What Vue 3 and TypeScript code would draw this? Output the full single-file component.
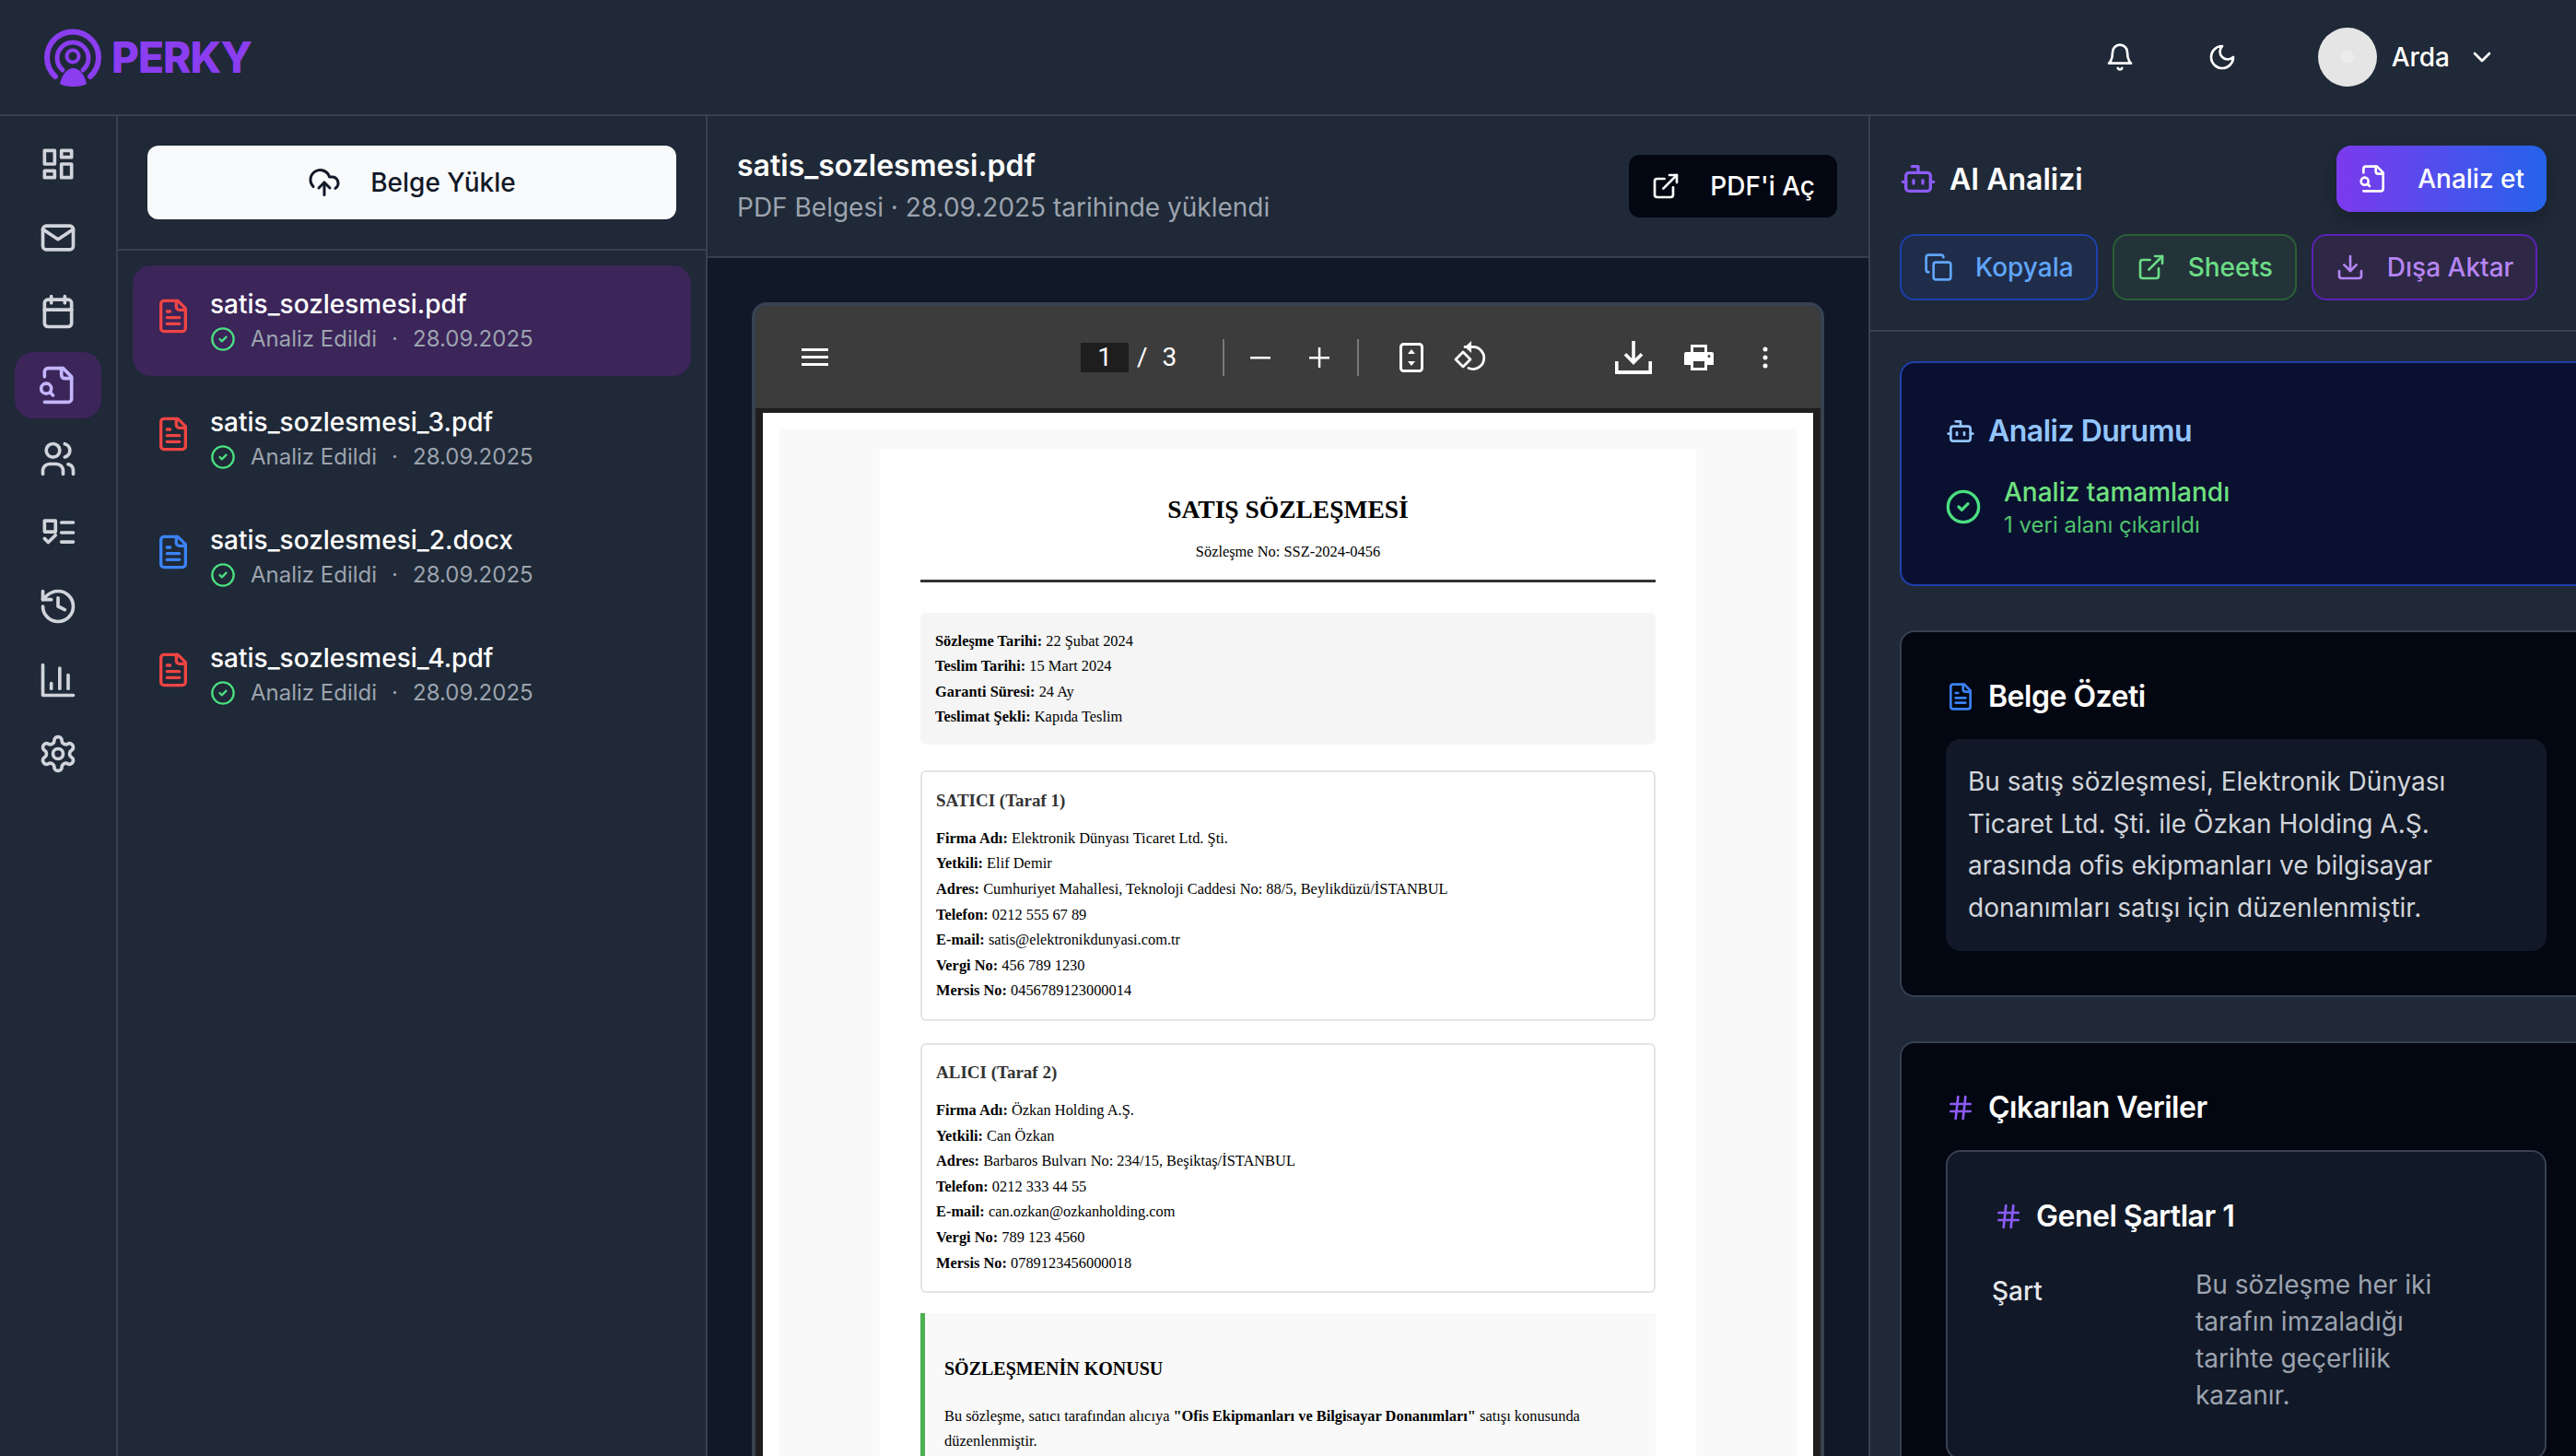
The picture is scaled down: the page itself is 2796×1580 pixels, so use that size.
<script setup lang="ts">
const icons: Record<string, string[]> = {
  dashboard: ['M4 4h6v8H4z', 'M4 16h6v4H4z', 'M14 12h6v8h-6z', 'M14 4h6v4h-6z'],
  mail: ['M3 7a2 2 0 0 1 2-2h14a2 2 0 0 1 2 2v10a2 2 0 0 1-2 2H5a2 2 0 0 1-2-2z', 'M3 7l9 6 9-6'],
  calendar: ['M4 7a2 2 0 0 1 2-2h12a2 2 0 0 1 2 2v12a2 2 0 0 1-2 2H6a2 2 0 0 1-2-2z', 'M16 3v4', 'M8 3v4', 'M4 11h16'],
  fileSearch: ['M4 22h14a2 2 0 0 0 2-2V7l-5-5H6a2 2 0 0 0-2 2v3', 'M14 2v4a2 2 0 0 0 2 2h4', 'M5 17a3 3 0 1 0 0-6 3 3 0 0 0 0 6z', 'M9 18l-1.5-1.5'],
  users: ['M5 7a4 4 0 1 0 8 0 4 4 0 1 0-8 0', 'M3 21v-2a4 4 0 0 1 4-4h4a4 4 0 0 1 4 4v2', 'M16 3.13a4 4 0 0 1 0 7.75', 'M21 21v-2a4 4 0 0 0-3-3.85'],
  tasks: ['M4 5h6.5v6.5H4z', 'M14 6h7', 'M14 12h7', 'M14 17.5h7', 'M4 15.5l2.2 2.2 4.3-4.2'],
  history: ['M3 12a9 9 0 1 0 9-9 9.75 9.75 0 0 0-6.74 2.74L3 8', 'M3 3v5h5', 'M12 7v5l4 2'],
  chart: ['M3 3v18h18', 'M18 17V9', 'M13 17V5', 'M8 17v-3'],
  settings: [
    'M12.22 2h-.44a2 2 0 0 0-2 2v.18a2 2 0 0 1-1 1.73l-.43.25a2 2 0 0 1-2 0l-.15-.08a2 2 0 0 0-2.73.73l-.22.38a2 2 0 0 0 .73 2.73l.15.1a2 2 0 0 1 1 1.72v.51a2 2 0 0 1-1 1.74l-.15.09a2 2 0 0 0-.73 2.73l.22.38a2 2 0 0 0 2.73.73l.15-.08a2 2 0 0 1 2 0l.43.25a2 2 0 0 1 1 1.73V20a2 2 0 0 0 2 2h.44a2 2 0 0 0 2-2v-.18a2 2 0 0 1 1-1.73l.43-.25a2 2 0 0 1 2 0l.15.08a2 2 0 0 0 2.73-.73l.22-.39a2 2 0 0 0-.73-2.73l-.15-.08a2 2 0 0 1-1-1.74v-.5a2 2 0 0 1 1-1.74l.15-.09a2 2 0 0 0 .73-2.73l-.22-.38a2 2 0 0 0-2.73-.73l-.15.08a2 2 0 0 1-2 0l-.43-.25a2 2 0 0 1-1-1.73V4a2 2 0 0 0-2-2z',
    'M9 12a3 3 0 1 0 6 0 3 3 0 1 0-6 0',
  ],
  upload: ['M4 14.9A7 7 0 1 1 15.71 8h1.79a4.5 4.5 0 0 1 2.5 8.24', 'M12 12v9', 'M16 16l-4-4-4 4'],
  check: ['M2 12a10 10 0 1 0 20 0 10 10 0 1 0-20 0', 'M9 12l2 2 4-4'],
  file: ['M15 2H6a2 2 0 0 0-2 2v16a2 2 0 0 0 2 2h12a2 2 0 0 0 2-2V7z', 'M14 2v4a2 2 0 0 0 2 2h4', 'M10 9H8', 'M16 13H8', 'M16 17H8'],
  external: ['M15 3h6v6', 'M10 14L21 3', 'M18 13v6a2 2 0 0 1-2 2H5a2 2 0 0 1-2-2V8a2 2 0 0 1 2-2h6'],
  copy: ['M10 8h10a2 2 0 0 1 2 2v10a2 2 0 0 1-2 2H10a2 2 0 0 1-2-2V10a2 2 0 0 1 2-2z', 'M4 16c-1.1 0-2-.9-2-2V4c0-1.1.9-2 2-2h10c1.1 0 2 .9 2 2'],
  download: ['M21 15v4a2 2 0 0 1-2 2H5a2 2 0 0 1-2-2v-4', 'M7 10l5 5 5-5', 'M12 15V3'],
  bot: ['M12 8V4H8', 'M6 8h12a2 2 0 0 1 2 2v8a2 2 0 0 1-2 2H6a2 2 0 0 1-2-2v-8a2 2 0 0 1 2-2z', 'M2 14h2', 'M20 14h2', 'M15 13v2', 'M9 13v2'],
  bell: ['M6 8a6 6 0 0 1 12 0c0 7 3 9 3 9H3s3-2 3-9', 'M10.3 21a1.94 1.94 0 0 0 3.4 0'],
  moon: ['M12 3a6 6 0 0 0 9 9 9 9 0 1 1-9-9z'],
  chevron: ['M6 9l6 6 6-6'],
  hash: ['M4 9h16', 'M4 15h16', 'M10 3L8 21', 'M16 3l-2 18'],
}

const navItems = ['dashboard', 'mail', 'calendar', 'fileSearch', 'users', 'tasks', 'history', 'chart', 'settings']

const documents = [
  { name: 'satis_sozlesmesi.pdf', kind: 'pdf', active: true },
  { name: 'satis_sozlesmesi_3.pdf', kind: 'pdf', active: false },
  { name: 'satis_sozlesmesi_2.docx', kind: 'doc', active: false },
  { name: 'satis_sozlesmesi_4.pdf', kind: 'pdf', active: false },
]

const infoRows = [
  ['Sözleşme Tarihi:', '22 Şubat 2024'],
  ['Teslim Tarihi:', '15 Mart 2024'],
  ['Garanti Süresi:', '24 Ay'],
  ['Teslimat Şekli:', 'Kapıda Teslim'],
]

const parties = [
  {
    title: 'SATICI (Taraf 1)',
    rows: [
      ['Firma Adı:', 'Elektronik Dünyası Ticaret Ltd. Şti.'],
      ['Yetkili:', 'Elif Demir'],
      ['Adres:', 'Cumhuriyet Mahallesi, Teknoloji Caddesi No: 88/5, Beylikdüzü/İSTANBUL'],
      ['Telefon:', '0212 555 67 89'],
      ['E-mail:', 'satis@elektronikdunyasi.com.tr'],
      ['Vergi No:', '456 789 1230'],
      ['Mersis No:', '0456789123000014'],
    ],
  },
  {
    title: 'ALICI (Taraf 2)',
    rows: [
      ['Firma Adı:', 'Özkan Holding A.Ş.'],
      ['Yetkili:', 'Can Özkan'],
      ['Adres:', 'Barbaros Bulvarı No: 234/15, Beşiktaş/İSTANBUL'],
      ['Telefon:', '0212 333 44 55'],
      ['E-mail:', 'can.ozkan@ozkanholding.com'],
      ['Vergi No:', '789 123 4560'],
      ['Mersis No:', '0789123456000018'],
    ],
  },
]
</script>

<template>
  <div class="app">
    <header class="topbar">
      <div class="brand">
        <svg class="logo" viewBox="0 0 62 63" fill="none">
          <path d="M12 52A28 28 0 1 1 50 52" stroke="#8b3df0" stroke-width="6" />
          <path d="M20 45A17 17 0 1 1 42 45" stroke="#8b3df0" stroke-width="5" />
          <circle cx="31" cy="30" r="6.5" stroke="#8b3df0" stroke-width="4" />
          <path d="M17 60C19 50 25 43 31.500 43C38 43 44 50 46 60C40 64 23 64 17 60Z" fill="#8b3df0" />
        </svg>
        <span class="brand-name">PERKY</span>
      </div>
      <div class="topbar-right">
        <svg class="ic32 bell" viewBox="0 0 24 24"><path v-for="d in icons.bell" :key="d" :d="d" /></svg>
        <svg class="ic32 moon" viewBox="0 0 24 24"><path v-for="d in icons.moon" :key="d" :d="d" /></svg>
        <div class="avatar"><span class="avatar-dot"></span></div>
        <span class="user-name">Arda</span>
        <svg class="ic32 chevron" viewBox="0 0 24 24"><path v-for="d in icons.chevron" :key="d" :d="d" /></svg>
      </div>
    </header>

    <div class="main">
      <nav class="sidebar">
        <div v-for="item in navItems" :key="item" class="nav-item" :class="{ active: item === 'fileSearch' }">
          <svg class="nav-icon" viewBox="0 0 24 24"><path v-for="d in icons[item]" :key="d" :d="d" /></svg>
        </div>
      </nav>

      <section class="doc-list">
        <div class="upload-wrap">
          <button class="upload-btn">
            <svg class="ic36" viewBox="0 0 24 24"><path v-for="d in icons.upload" :key="d" :d="d" /></svg>
            Belge Yükle
          </button>
        </div>
        <div class="doc-items">
          <div v-for="doc in documents" :key="doc.name" class="doc-item" :class="{ active: doc.active }">
            <svg class="doc-icon" :class="doc.kind" viewBox="0 0 24 24"><path v-for="d in icons.file" :key="d" :d="d" /></svg>
            <div>
              <div class="doc-name">{{ doc.name }}</div>
              <div class="doc-meta">
                <svg class="check-icon" viewBox="0 0 24 24"><path v-for="d in icons.check" :key="d" :d="d" /></svg>
                <span>Analiz Edildi</span>
                <span class="meta-dot">·</span>
                <span>28.09.2025</span>
              </div>
            </div>
          </div>
        </div>
      </section>

      <section class="viewer">
        <div class="viewer-head">
          <div>
            <div class="viewer-title">satis_sozlesmesi.pdf</div>
            <div class="viewer-sub">PDF Belgesi · 28.09.2025 tarihinde yüklendi</div>
          </div>
          <button class="open-btn">
            <svg class="ic32" viewBox="0 0 24 24"><path v-for="d in icons.external" :key="d" :d="d" /></svg>
            PDF'i Aç
          </button>
        </div>
        <div class="viewer-body">
          <div class="pdf-frame">
            <div class="pdf-toolbar">
              <svg class="pdf-menu" viewBox="0 0 29 19"><path d="M0 0h29v3H0zM0 8h29v3H0zM0 16h29v3H0z" /></svg>
              <span class="page-box">1</span>
              <span class="page-sep">/</span>
              <span class="page-total">3</span>
              <span class="pdf-divider first"></span>
              <svg class="pdf-zoom minus" viewBox="0 0 22 22"><path d="M0 10h22v2.500H0z" /></svg>
              <svg class="pdf-zoom plus" viewBox="0 0 22 22"><path d="M0 10h22v2.500H0zM9.800 0h2.500v22H9.800z" /></svg>
              <span class="pdf-divider"></span>
              <svg class="pdf-fit" viewBox="0 0 26 32">
                <rect x="1.500" y="1.500" width="23" height="29" rx="3" fill="none" stroke="#fff" stroke-width="3" />
                <path d="M13 7l4 5H9zM13 25l-4-5h8z" />
              </svg>
              <svg class="pdf-rotate" viewBox="0 0 36 36">
                <path d="M12 6.500h8a12 12 0 1 1-4 23" fill="none" stroke="#fff" stroke-width="2.800" />
                <path d="M19 0v13l-7-6.500z" />
                <path d="M10 12l8 8-8 8-8-8z" fill="none" stroke="#fff" stroke-width="2.800" />
              </svg>
              <svg class="pdf-download" viewBox="0 0 40 36">
                <path d="M18.200 0h3.600v19l6-6 2.500 2.500L20 26 9.700 15.500 12.200 13l6 6z" />
                <path d="M0 22h3.600v10h32.800V22H40v14H0z" />
              </svg>
              <svg class="pdf-print" viewBox="0 0 32 28">
                <path d="M7 8V0h18v8h5a2 2 0 0 1 2 2v12h-7v6H7v-6H0V10a2 2 0 0 1 2-2zm3-5v5h12V3zm0 15v7h12v-7zM27 11a1.500 1.500 0 1 0 0 3 1.500 1.500 0 0 0 0-3z" fill-rule="evenodd" />
              </svg>
              <svg class="pdf-more" viewBox="0 0 6 24">
                <circle cx="3" cy="3" r="2.500" /><circle cx="3" cy="12" r="2.500" /><circle cx="3" cy="21" r="2.500" />
              </svg>
            </div>
            <div class="pdf-stage">
              <div class="pdf-page">
                <div class="contract-bg">
                  <article class="contract">
                    <h1 class="contract-title">SATIŞ SÖZLEŞMESİ</h1>
                    <div class="contract-no">Sözleşme No: SSZ-2024-0456</div>
                    <div class="contract-rule"></div>
                    <div class="info-box">
                      <p v-for="row in infoRows" :key="row[0]"><b>{{ row[0] }}</b> {{ row[1] }}</p>
                    </div>
                    <div v-for="party in parties" :key="party.title" class="party">
                      <h3>{{ party.title }}</h3>
                      <p v-for="row in party.rows" :key="row[0]"><b>{{ row[0] }}</b> {{ row[1] }}</p>
                    </div>
                    <div class="clause">
                      <h2>SÖZLEŞMENİN KONUSU</h2>
                      <p>Bu sözleşme, satıcı tarafından alıcıya <b>"Ofis Ekipmanları ve Bilgisayar Donanımları"</b> satışı konusunda düzenlenmiştir.</p>
                    </div>
                  </article>
                </div>
              </div>
            </div>
          </div>
        </div>
      </section>

      <aside class="analysis">
        <div class="analysis-head">
          <div class="analysis-top">
            <div class="analysis-title">
              <svg class="ic40 purple" viewBox="0 0 24 24"><path v-for="d in icons.bot" :key="d" :d="d" /></svg>
              AI Analizi
            </div>
            <button class="analyze-btn">
              <svg class="ic32" viewBox="0 0 24 24"><path v-for="d in icons.fileSearch" :key="d" :d="d" /></svg>
              Analiz et
            </button>
          </div>
          <div class="action-row">
            <button class="action blue">
              <svg class="ic32" viewBox="0 0 24 24"><path v-for="d in icons.copy" :key="d" :d="d" /></svg>
              Kopyala
            </button>
            <button class="action green">
              <svg class="ic32" viewBox="0 0 24 24"><path v-for="d in icons.external" :key="d" :d="d" /></svg>
              Sheets
            </button>
            <button class="action violet">
              <svg class="ic32" viewBox="0 0 24 24"><path v-for="d in icons.download" :key="d" :d="d" /></svg>
              Dışa Aktar
            </button>
          </div>
        </div>

        <div class="analysis-body">
          <div class="card status-card">
            <div class="card-title status-title">
              <svg class="ic32" viewBox="0 0 24 24"><path v-for="d in icons.bot" :key="d" :d="d" /></svg>
              Analiz Durumu
            </div>
            <div class="status-row">
              <svg class="status-check" viewBox="0 0 24 24"><path v-for="d in icons.check" :key="d" :d="d" /></svg>
              <div>
                <div class="status-main">Analiz tamamlandı</div>
                <div class="status-sub">1 veri alanı çıkarıldı</div>
              </div>
            </div>
          </div>

          <div class="card summary-card">
            <div class="card-title">
              <svg class="ic32 blue-ic" viewBox="0 0 24 24"><path v-for="d in icons.file" :key="d" :d="d" /></svg>
              Belge Özeti
            </div>
            <div class="summary-box">
              Bu satış sözleşmesi, Elektronik Dünyası Ticaret Ltd. Şti. ile Özkan Holding A.Ş. arasında ofis ekipmanları ve bilgisayar donanımları satışı için düzenlenmiştir.
            </div>
          </div>

          <div class="card data-card">
            <div class="card-title">
              <svg class="ic32 hash" viewBox="0 0 24 24"><path v-for="d in icons.hash" :key="d" :d="d" /></svg>
              Çıkarılan Veriler
            </div>
            <div class="data-box">
              <div class="card-title data-title">
                <svg class="ic32 hash" viewBox="0 0 24 24"><path v-for="d in icons.hash" :key="d" :d="d" /></svg>
                Genel Şartlar 1
              </div>
              <div class="data-row">
                <div class="data-label">Şart</div>
                <div class="data-value">Bu sözleşme her iki tarafın imzaladığı tarihte geçerlilik kazanır.</div>
              </div>
            </div>
          </div>
        </div>
      </aside>
    </div>
  </div>
</template>

<style>
html, body { margin: 0; background: #1f2937; }
</style>

<style scoped>
* { box-sizing: border-box; }
svg { display: block; flex: none; fill: none; stroke: currentColor; stroke-width: 2; stroke-linecap: round; stroke-linejoin: round; }
button { font-family: inherit; cursor: pointer; }

.app {
  height: 100vh;
  display: flex;
  flex-direction: column;
  overflow: hidden;
  background: #1f2937;
  color: #fff;
  font-family: Inter, "Noto Sans", sans-serif;
  font-size: 28px;
}

.ic32 { width: 32px; height: 32px; }
.ic36 { width: 36px; height: 36px; }
.ic40 { width: 40px; height: 40px; }

.topbar {
  height: 126px;
  flex: none;
  display: flex;
  align-items: center;
  justify-content: space-between;
  border-bottom: 2px solid #374151;
  padding: 0 86px 0 48px;
}
.brand { display: flex; align-items: center; gap: 11px; }
.logo { width: 62px; height: 63px; stroke: none; }
.brand-name { font-size: 46px; font-weight: 800; color: #8b3df0; letter-spacing: -1px; }
.topbar-right { display: flex; align-items: center; }
.moon { margin-left: 79px; }
.avatar {
  width: 64px;
  height: 64px;
  margin-left: 88px;
  border-radius: 50%;
  background: #e5e5e5;
  display: flex;
  align-items: center;
  justify-content: center;
}
.avatar-dot { width: 14px; height: 14px; border-radius: 50%; background: #ececec; }
.user-name { margin-left: 16px; font-weight: 500; }
.chevron { margin-left: 19px; }

.main { flex: 1; min-height: 0; display: flex; }

.sidebar {
  width: 128px;
  flex: none;
  border-right: 2px solid #374151;
  padding: 16px;
  display: flex;
  flex-direction: column;
  gap: 8px;
}
.nav-item {
  height: 72px;
  border-radius: 20px;
  display: flex;
  align-items: center;
  justify-content: center;
  color: #d1d5db;
}
.nav-item.active { background: #3b2559; color: #c4b5fd; }
.nav-icon { width: 44px; height: 44px; }

.doc-list { width: 640px; flex: none; border-right: 2px solid #374151; }
.upload-wrap { padding: 32px; border-bottom: 2px solid #374151; }
.upload-btn {
  width: 100%;
  height: 80px;
  border: none;
  border-radius: 12px;
  background: #f9fafb;
  color: #111827;
  font-size: 28px;
  font-weight: 500;
  display: flex;
  align-items: center;
  justify-content: center;
  gap: 32px;
}
.doc-items { padding: 16px; display: flex; flex-direction: column; gap: 8px; }
.doc-item {
  height: 120px;
  padding: 0 24px;
  border-radius: 20px;
  display: flex;
  align-items: center;
  gap: 20px;
}
.doc-item.active { background: #3b2559; }
.doc-icon { width: 40px; height: 40px; margin-top: -10px; }
.doc-icon.pdf { color: #ef4444; }
.doc-icon.doc { color: #3b82f6; }
.doc-name { font-weight: 500; line-height: 36px; }
.doc-meta { display: flex; align-items: center; margin-top: 4px; font-size: 24px; line-height: 32px; color: #9ca3af; }
.check-icon { width: 28px; height: 28px; margin-right: 16px; color: #4ade80; }
.meta-dot { margin: 0 16px; }

.viewer { flex: 1; min-width: 0; display: flex; flex-direction: column; border-right: 2px solid #374151; background: #111827; }
.viewer-head {
  height: 154px;
  flex: none;
  background: #1f2937;
  border-bottom: 2px solid #374151;
  padding: 0 34px 0 32px;
  display: flex;
  align-items: center;
  justify-content: space-between;
}
.viewer-title { font-size: 32px; font-weight: 600; line-height: 42px; }
.viewer-sub { margin-top: 4px; line-height: 40px; color: #9ca3af; }
.open-btn {
  height: 68px;
  padding: 0 24px;
  border: none;
  border-radius: 12px;
  background: #030712;
  color: #fff;
  font-size: 28px;
  font-weight: 500;
  display: flex;
  align-items: center;
  gap: 32px;
}

.viewer-body { flex: 1; min-height: 0; padding: 48px 48px 0; overflow: hidden; }
.pdf-frame {
  height: 100%;
  min-height: 1300px;
  border: 4px solid #374151;
  border-radius: 16px;
  overflow: hidden;
  background: #1e1e1e;
}
.pdf-toolbar {
  height: 111px;
  background: #3c3c3c;
  display: flex;
  align-items: center;
  padding-left: 50px;
  font-family: Roboto, sans-serif;
  font-size: 28px;
}
.pdf-toolbar svg { fill: #fff; stroke: none; }
.pdf-toolbar svg path[fill='none'], .pdf-toolbar svg rect { stroke: #fff; }
.pdf-menu { width: 29px; height: 19px; }
.page-box { width: 52px; height: 32px; margin-left: 274px; background: #1e1e1e; text-align: center; line-height: 32px; }
.page-sep { margin-left: 9px; }
.page-total { margin-left: 16px; }
.pdf-divider { width: 2px; height: 40px; background: #7a7a7a; margin-left: 30px; }
.pdf-divider.first { margin-left: 50px; }
.pdf-zoom { width: 22px; height: 22px; }
.pdf-zoom.minus { margin-left: 28px; }
.pdf-zoom.plus { margin-left: 42px; }
.pdf-fit { width: 26px; height: 32px; margin-left: 44px; }
.pdf-rotate { width: 36px; height: 36px; margin-left: 33px; }
.pdf-download { width: 40px; height: 36px; margin-left: 139px; }
.pdf-print { width: 32px; height: 28px; margin-left: 35px; }
.pdf-more { width: 6px; height: 24px; margin-left: 53px; }

.pdf-stage { padding: 5px 8px 0; }
.pdf-page { background: #fff; padding: 18px 18px 0; }
.contract-bg { background: #f9f9f9; padding-top: 21px; }
.contract {
  width: 886px;
  margin: 0 auto;
  background: #fff;
  padding: 48px 44px 40px;
  color: #000;
  font-family: "Liberation Serif", serif;
  font-size: 16.400px;
}
.contract p { margin: 0; line-height: 27.600px; }
.contract-title { margin: 0; text-align: center; font-size: 27.500px; line-height: 36px; font-weight: 700; }
.contract-no { margin-top: 17px; text-align: center; line-height: 22px; }
.contract-rule { height: 3px; margin-top: 19px; background: #333; }
.info-box { margin-top: 33px; padding: 16.500px 16px; background: #f5f5f5; border-radius: 6px; }
.party {
  margin-top: 28px;
  padding: 16.500px 15px;
  border: 2px solid #e5e5e5;
  border-radius: 6px;
}
.party + .party { margin-top: 24px; }
.party h3 { margin: 0 0 13px; font-size: 19px; line-height: 28px; font-weight: 700; color: #333; }
.clause { margin-top: 22px; padding: 46px 21px 30px; border-left: 5px solid #4caf50; background: #f9f9f9; }
.clause h2 { margin: 0 0 24px; font-size: 20px; line-height: 28px; font-weight: 700; }

.analysis { width: 766px; flex: none; overflow: hidden; }
.analysis-head { height: 234px; padding: 32px 32px 0 32px; border-bottom: 2px solid #374151; }
.analysis-top { display: flex; align-items: center; justify-content: space-between; height: 72px; }
.analysis-title { display: flex; align-items: center; gap: 14px; font-size: 32px; font-weight: 600; }
.purple { color: #8b5cf6; }
.analyze-btn {
  height: 72px;
  padding: 0 24px;
  border: none;
  border-radius: 16px;
  background: linear-gradient(90deg, #7c3aed, #2563eb);
  box-shadow: 0 8px 16px rgba(0, 0, 0, 0.2);
  color: #fff;
  font-size: 28px;
  font-weight: 500;
  display: flex;
  align-items: center;
  gap: 32px;
}
.action-row { display: flex; gap: 16px; margin-top: 24px; }
.action {
  height: 72px;
  padding: 0 24px;
  border: 2px solid;
  border-radius: 16px;
  font-size: 28px;
  font-weight: 500;
  display: flex;
  align-items: center;
  gap: 24px;
}
.action.blue { background: #1f2d4a; border-color: #1e40af; color: #60a5fa; }
.action.green { background: #233339; border-color: #2a6036; color: #6bdc86; }
.action.violet { background: #2e2745; border-color: #5b21b6; color: #b585f2; }

.analysis-body { padding: 32px 0 0 32px; display: flex; flex-direction: column; gap: 48px; }
.card {
  width: 752px;
  padding: 48px 48px 48px;
  border: 2px solid #374151;
  border-radius: 16px;
  background: #030712;
}
.card-title { display: flex; align-items: center; gap: 14px; font-size: 32px; font-weight: 600; line-height: 44px; letter-spacing: -0.5px; }
.status-card { border-color: #1e40af; background: #0a1030; height: 244px; padding-top: 52px; }
.status-title { color: #93c5fd; }
.status-row { display: flex; align-items: center; gap: 24px; margin-top: 24px; }
.status-check { width: 40px; height: 40px; color: #4ade80; margin-left: -1px; }
.status-main { color: #6ee07f; font-weight: 500; line-height: 40px; }
.status-sub { color: #4fc26b; font-size: 24px; line-height: 32px; }
.blue-ic { color: #3b82f6; }
.hash { color: #8b5cf6; }
.summary-box {
  margin-top: 24px;
  padding: 24px;
  border-radius: 16px;
  background: #111827;
  color: #d1d5db;
  line-height: 45.500px;
}
.data-box {
  margin-top: 24px;
  padding: 48px;
  border: 2px solid #374151;
  border-radius: 16px;
  background: #111827;
}
.data-title { margin-left: 2px; }
.data-row { display: flex; margin-top: 32px; }
.data-label { width: 221px; flex: none; font-weight: 500; color: #e5e7eb; padding-top: 7px; line-height: 40px; }
.data-value { width: 310px; color: #9ca3af; line-height: 40px; }
</style>
